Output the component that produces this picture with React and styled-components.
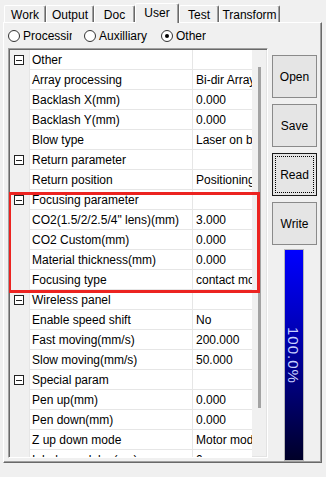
import styled, { createGlobalStyle } from 'styled-components';

const rows = [
  { group: 'Other' },
  { name: 'Array processing', value: 'Bi-dir Array processing' },
  { name: 'Backlash X(mm)', value: '0.000' },
  { name: 'Backlash Y(mm)', value: '0.000' },
  { name: 'Blow type', value: 'Laser on blow' },
  { group: 'Return parameter' },
  { name: 'Return position', value: 'Positioning point' },
  { group: 'Focusing parameter' },
  { name: 'CO2(1.5/2/2.5/4" lens)(mm)', value: '3.000' },
  { name: 'CO2 Custom(mm)', value: '0.000' },
  { name: 'Material thickness(mm)', value: '0.000' },
  { name: 'Focusing type', value: 'contact mode' },
  { group: 'Wireless panel' },
  { name: 'Enable speed shift', value: 'No' },
  { name: 'Fast moving(mm/s)', value: '200.000' },
  { name: 'Slow moving(mm/s)', value: '50.000' },
  { group: 'Special param' },
  { name: 'Pen up(mm)', value: '0.000' },
  { name: 'Pen down(mm)', value: '0.000' },
  { name: 'Z up down mode', value: 'Motor mode' },
  { name: 'Inhale on delay(ms)', value: '0' },
];

const tabs = [
  { label: 'Work', width: 42 },
  { label: 'Output', width: 48 },
  { label: 'Doc', width: 41 },
  { label: 'User', width: 44, active: true },
  { label: 'Test', width: 40 },
  { label: 'Transform', width: 61 },
];

export default function App() {
  return (
    <Window>
      <GlobalStyle />
      <TabBar>
        {tabs.map((t) => (
          <Tab key={t.label} $width={t.width} $active={t.active}>
            {t.label}
          </Tab>
        ))}
      </TabBar>
      <Panel>
        <RadioRow>
          <RadioItem $col={76} $clip={64}>
            <RadioCircle />
            <RadioLabel>Processing</RadioLabel>
          </RadioItem>
          <RadioItem $col={77}>
            <RadioCircle />
            <RadioLabel>Auxilliary</RadioLabel>
          </RadioItem>
          <RadioItem>
            <RadioCircle $checked />
            <RadioLabel>Other</RadioLabel>
          </RadioItem>
        </RadioRow>
        <Content>
          <Grid>
            <Rows>
              {rows.map((r, i) =>
                r.group ? (
                  <Row key={i}>
                    <Gutter>
                      <Expander />
                    </Gutter>
                    <NameCell>{r.group}</NameCell>
                    <ValueCell />
                  </Row>
                ) : (
                  <Row key={i}>
                    <Gutter />
                    <NameCell>{r.name}</NameCell>
                    <ValueCell>{r.value}</ValueCell>
                  </Row>
                )
              )}
            </Rows>
            <ScrollTrack>
              <Thumb />
            </ScrollTrack>
            <Highlight />
          </Grid>
          <Side>
            <Button>Open</Button>
            <Button>Save</Button>
            <Button $focused>Read</Button>
            <Button>Write</Button>
            <Progress>
              <ProgressText>100.0%</ProgressText>
            </Progress>
          </Side>
        </Content>
      </Panel>
    </Window>
  );
}

const GlobalStyle = createGlobalStyle`
  body {
    margin: 0;
    background: #f0f0f0;
    font-family: 'Liberation Sans', Arial, sans-serif;
    font-size: 12px;
    color: #000;
  }
`;

const Window = styled.div`
  width: 326px;
  height: 477px;
  background: #f0f0f0;
  overflow: hidden;
`;

const TabBar = styled.div`
  display: flex;
  align-items: flex-end;
  height: 22px;
  padding-left: 4px;
  position: relative;
  z-index: 1;
`;

const Tab = styled.div`
  box-sizing: border-box;
  width: ${(p) => p.$width}px;
  height: ${(p) => (p.$active ? 20 : 17)}px;
  margin-bottom: ${(p) => (p.$active ? -1 : 0)}px;
  display: flex;
  justify-content: center;
  align-items: ${(p) => (p.$active ? 'flex-start' : 'center')};
  padding-top: ${(p) => (p.$active ? 2 : 2)}px;
  background: #f0f0f0;
  border-top: 1px solid #fff;
  border-left: 1px solid #fff;
  border-right: 1px solid #696969;
  box-shadow: inset -1px 0 0 #a0a0a0;
  border-radius: 2px 2px 0 0;
  white-space: nowrap;
`;

const Panel = styled.div`
  box-sizing: border-box;
  margin-left: 3px;
  width: 319px;
  height: 441px;
  border-top: 1px solid #fff;
  border-left: 1px solid #fff;
  border-right: 1px solid #696969;
  border-bottom: 1px solid #696969;
  box-shadow: inset -1px -1px 0 #a0a0a0;
  padding: 0 0 0 4px;
`;

const RadioRow = styled.div`
  display: flex;
  align-items: center;
  height: 25px;
  padding-top: 1px;
  box-sizing: border-box;
`;

const RadioItem = styled.div`
  width: ${(p) => (p.$col ? `${p.$col}px` : 'auto')};
  flex: none;
  display: flex;
  align-items: center;
  gap: 3px;
  max-width: ${(p) => (p.$clip ? `${p.$clip}px` : 'none')};
  margin-right: ${(p) => (p.$clip ? `${p.$col - p.$clip}px` : '0')};
  overflow: hidden;
  white-space: nowrap;
`;

const RadioCircle = styled.span`
  box-sizing: border-box;
  flex: none;
  width: 12px;
  height: 12px;
  border-radius: 50%;
  border: 1px solid #333;
  background: #fff;
  display: flex;
  align-items: center;
  justify-content: center;

  &::after {
    content: '';
    display: ${(p) => (p.$checked ? 'block' : 'none')};
    width: 4px;
    height: 4px;
    border-radius: 50%;
    background: #000;
  }
`;

const RadioLabel = styled.span`
  line-height: 14px;
`;

const Content = styled.div`
  display: flex;
  align-items: flex-start;
`;

const Grid = styled.div`
  position: relative;
  box-sizing: border-box;
  width: 260px;
  height: 410px;
  display: flex;
  border-top: 1px solid #a0a0a0;
  border-left: 1px solid #a0a0a0;
  border-right: 1px solid #fff;
  border-bottom: 1px solid #fff;
  box-shadow: inset 1px 1px 0 #696969, inset -1px -1px 0 #e3e3e3;
  padding: 1px;
  background: #f0f0f0;
  overflow: hidden;
`;

const Rows = styled.div`
  width: 242px;
  flex: none;
  display: flex;
  flex-direction: column;
`;

const Row = styled.div`
  display: flex;
  height: 20px;
  flex: none;
`;

const Gutter = styled.div`
  width: 19px;
  flex: none;
  display: flex;
  align-items: center;
  justify-content: center;
  background: #f0f0f0;
`;

const Expander = styled.span`
  box-sizing: border-box;
  width: 10px;
  height: 10px;
  margin-left: -2px;
  border: 1px solid #222;
  background: #fff;
  display: flex;
  align-items: center;
  justify-content: center;

  &::after {
    content: '';
    width: 6px;
    height: 1px;
    background: #222;
  }
`;

const cell = `
  box-sizing: border-box;
  height: 20px;
  padding-top: 2px;
  line-height: 17px;
  background: #fff;
  border-bottom: 1px solid #e6e6e6;
  border-left: 1px solid #e6e6e6;
  white-space: nowrap;
  overflow: hidden;
`;

const NameCell = styled.div`
  ${cell}
  width: 163px;
  flex: none;
  padding-left: 2px;
`;

const ValueCell = styled.div`
  ${cell}
  width: 60px;
  flex: none;
  padding-left: 3px;
`;

const ScrollTrack = styled.div`
  flex: 1;
  display: flex;
  justify-content: center;
  padding-top: 17px;
  background: #f0f0f0;
`;

const Thumb = styled.div`
  width: 3px;
  height: 341px;
  background: #a3a3a3;
`;

const Highlight = styled.div`
  position: absolute;
  left: -1px;
  top: 143px;
  width: 252px;
  height: 101px;
  box-sizing: border-box;
  border: 3px solid #ec2320;
  pointer-events: none;
`;

const Side = styled.div`
  display: flex;
  flex-direction: column;
  align-items: center;
  width: 45px;
  margin-left: 4px;
  padding-top: 7px;
  gap: 6px;
`;

const Button = styled.div`
  position: relative;
  box-sizing: border-box;
  width: 45px;
  height: 43px;
  display: flex;
  align-items: center;
  justify-content: center;
  background: #e5e5e5;
  border: 1px solid ${(p) => (p.$focused ? '#1a1a1a' : '#8a8a8a')};

  &::before {
    content: '';
    display: ${(p) => (p.$focused ? 'block' : 'none')};
    position: absolute;
    inset: 2px;
    border: 1px dotted #000;
  }
`;

const Progress = styled.div`
  box-sizing: border-box;
  width: 20px;
  height: 212px;
  margin-top: -2px;
  margin-right: 2px;
  border: 1px solid #b8b8b8;
  background: linear-gradient(to bottom, #0000ff 0%, #0000c8 30%, #00007a 65%, #000028 100%);
  display: flex;
  align-items: center;
  justify-content: center;
`;

const ProgressText = styled.span`
  writing-mode: vertical-rl;
  color: #c8d0ff;
  font-size: 15px;
  letter-spacing: 1px;
`;
